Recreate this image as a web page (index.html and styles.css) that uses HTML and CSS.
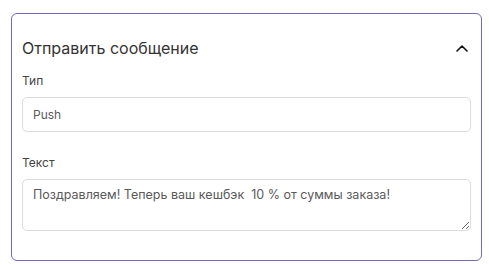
FILE: index.html
```html
<!DOCTYPE html>
<html lang="ru">
<head>
<meta charset="utf-8">
<link rel="stylesheet" href="styles.css">
</head>
<body>
<section class="card">
  <div class="card-header">
    <h2 class="card-title">Отправить сообщение</h2>
    <button class="collapse-btn" type="button" aria-label="Свернуть">
      <svg width="12" height="8" viewBox="0 0 12 8" fill="none">
        <path d="M1 7 L6 2 L11 7" stroke="#111" stroke-width="1.6" stroke-linecap="round" stroke-linejoin="round"/>
      </svg>
    </button>
  </div>
  <div class="field field-type">
    <label class="field-label">Тип</label>
    <div class="input">Push</div>
  </div>
  <div class="field field-text">
    <label class="field-label">Текст</label>
    <textarea class="textarea">Поздравляем! Теперь ваш кешбэк  10 % от суммы заказа!</textarea>
  </div>
</section>
</body>
</html>
```
FILE: styles.css
```css
html, body {
  margin: 0;
  padding: 0;
  background: #fff;
}
body {
  padding: 13px 7px 0 11px;
  font-family: Inter, "Noto Sans", sans-serif;
}
.card {
  box-sizing: border-box;
  width: 471px;
  height: 248px;
  border: 1px solid #7767c0;
  border-radius: 6px;
  padding: 22px 10px 0 10px;
}
.card-header {
  display: flex;
  align-items: center;
  justify-content: space-between;
  height: 24px;
}
.card-title {
  margin: 0;
  font-size: 16px;
  font-weight: 400;
  line-height: 24px;
  color: #333;
}
.collapse-btn {
  border: 0;
  background: none;
  padding: 0;
  margin-right: 2px;
  display: flex;
  align-items: center;
  justify-content: center;
  width: 14px;
  height: 14px;
}
.field {
  display: flex;
  flex-direction: column;
}
.field-type {
  margin-top: 13px;
}
.field-text {
  margin-top: 23px;
}
.field-label {
  font-size: 12px;
  line-height: 16px;
  color: #444;
  margin-bottom: 8px;
}
.input {
  box-sizing: border-box;
  height: 35px;
  border: 1px solid #dcdcdc;
  border-radius: 5px;
  padding: 0 10px;
  display: flex;
  align-items: center;
  font-size: 12px;
  color: #5a5a5a;
}
.textarea {
  box-sizing: border-box;
  height: 52px;
  border: 1px solid #dcdcdc;
  border-radius: 5px;
  padding: 7px 10px;
  font-family: inherit;
  font-size: 12.5px;
  line-height: 16px;
  color: #5a5a5a;
  resize: vertical;
  outline: none;
}
```
